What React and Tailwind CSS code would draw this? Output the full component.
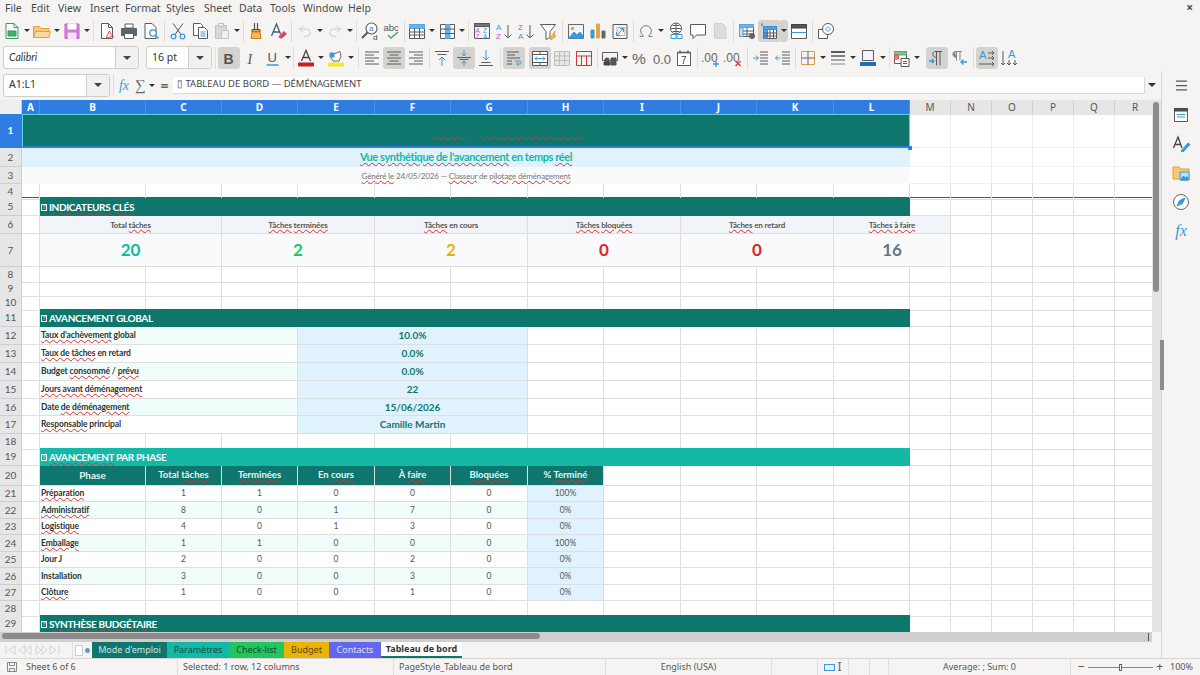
import { Undo2, Redo2, Omega, Menu } from "lucide-react";

const ui = "#5a5a5a";
const blue = "#3a9ad9";

const P = ({ d, c = ui, w = 1, f = "none" }) => <path d={d} stroke={c} strokeWidth={w} fill={f} />;

const icons = {
  newdoc: <><P d="M5 3.500h8l4 4v11H5z" c="#3b9c62" f="#fff" /><P d="M7 11h8v5H7z" c="#2e9e5b" f="#43b06f" /><P d="M13 3.500v4h4" c="#3b9c62" /></>,
  open: <><P d="M2.500 6.500h6l1.500 2h8v9h-15.500z" c="#e0a040" f="#f6c97a" /><P d="M2.500 17.500l2-6h15l-2 6z" c="#e0a040" f="#fbd9a0" /></>,
  save: <><P d="M4 4h14v14.500H4z" c="#c060d0" f="#d07cdc" /><P d="M7 4h8v5H7z" c="#fff" f="#fff" /><P d="M7 13h8v5.500H7z" c="#f3dff6" f="#f3dff6" /></>,
  pdf: <><P d="M5.500 3.500h7l4 4v11h-11z" f="#fff" /><P d="M12.500 3.500v4h4" /><P d="M10 18.500c2-5 3-7 3.500-7.500 1 2 1 4 4 5.500-3 0-5 .5-7 2z" c="#d43d3d" /></>,
  print: <><P d="M7 4h8v4H7z" f="#fff" /><P d="M3.500 8.500h15v7h-15z" c="#5a6570" f="#5a6570" /><P d="M6.500 13.500h9v5h-9z" f="#fff" /></>,
  preview: <><P d="M5 3.500h7l4 4v11H5z" f="#fff" /><circle cx="13" cy="13" r="3.200" stroke={blue} strokeWidth="1.300" fill="#fff" /><P d="M15.500 15.500l3 3" c={blue} w={1.500} /></>,
  cut: <><P d="M6 3.500l8 11M16 3.500l-8 11" c="#555" /><circle cx="6.500" cy="16.500" r="2.300" stroke={blue} strokeWidth="1.300" fill="none" /><circle cx="15.500" cy="16.500" r="2.300" stroke={blue} strokeWidth="1.300" fill="none" /></>,
  copy: <><P d="M4.500 3.500h7l2 2v10h-9z" f="#fff" /><P d="M9.500 7.500h6l3 3v8h-9z" f="#fff" /><P d="M11.500 12h5M11.500 14h5M11.500 16h5" c={blue} /></>,
  paste: <><P d="M4.500 5.500h11v13h-11z" c="#c4c4c4" f="#d8d8d8" /><P d="M7.500 3.500h5v3h-5z" c="#bbb" f="#eee" /><P d="M10.500 10.500h7v8h-7z" c="#c4c4c4" f="#efefef" /></>,
  clone: <><P d="M9.500 3v6M12.500 3v6" c="#555" w={1.200} /><P d="M7 9.500h8v2.500H7z" c="#555" f="#e8a33d" /><P d="M7 12h8l1 6.500H6z" c="#c97f1d" f="#f4b85c" /></>,
  clear: <><P d="M4.500 16L9.500 4l4 10M6.500 12h6" c="#41607e" w={1.300} /><P d="M12 16.500l5-5 2.500 2.500-5 4h-1.500z" c="#e0405a" f="#e0405a" /></>,
  find: <><circle cx="12.500" cy="8.500" r="5.500" stroke={ui} strokeWidth="1.100" fill="#fff" /><P d="M8.500 12.500l-5.500 5.500" c={ui} w={2} /><text x="10" y="11" fontSize="8" fill="#3a7cc4" fontFamily="Liberation Sans">a</text><text x="14" y="20" fontSize="8" fill="#444" fontFamily="Liberation Sans">d</text></>,
  spell: <><text x="2.500" y="11" fontSize="9.500" fill="#555" fontFamily="Liberation Sans">abc</text><P d="M7 15l3 3 7-6" c="#47a868" w={1.500} /></>,
  table: <><P d="M3.500 4.500h15v14h-15z" f="#fff" /><P d="M3.500 4.500h15v4h-15z" c="#5aa6e2" f="#6db3ea" /><P d="M3.500 12h15M3.500 15h15M8.500 8.500v10M13.500 8.500v10" /></>,
  cols: <><P d="M4.500 4.500h14v14h-14z" f="#fff" /><P d="M9.500 4.500h4.500v14H9.500z" c="#5aa6e2" f="#6db3ea" /><P d="M4.500 9h14M4.500 13.500h14" /></>,
  sort: <><P d="M3.500 3.500h15v15h-15z" f="#f7f7f7" /><P d="M3.500 3.500h15v3h-15z" c="#555" f="#777" /><text x="4.500" y="13" fontSize="6.500" fill="#b05cc0" fontFamily="Liberation Sans">A</text><text x="4.500" y="18.500" fontSize="6.500" fill="#b05cc0" fontFamily="Liberation Sans">Z</text><text x="12" y="13" fontSize="6.500" fill={blue} fontFamily="Liberation Sans">Z</text><text x="12" y="18.500" fontSize="6.500" fill={blue} fontFamily="Liberation Sans">A</text></>,
  asc: <><text x="3" y="10" fontSize="8" fill={blue} fontFamily="Liberation Sans">A</text><text x="3" y="18.500" fontSize="8" fill="#c050c8" fontFamily="Liberation Sans">Z</text><P d="M15 5v13M11.500 14.500l3.500 3.500 3.500-3.500" /></>,
  desc: <><text x="3" y="10" fontSize="8" fill="#c050c8" fontFamily="Liberation Sans">Z</text><text x="3" y="18.500" fontSize="8" fill={blue} fontFamily="Liberation Sans">A</text><P d="M15 5v13M11.500 14.500l3.500 3.500 3.500-3.500" /></>,
  filter: <><P d="M3.500 4.500h15l-5.500 7v6l-4 2v-8z" f="#fff" /><P d="M13 19l5-8-1 4 2 1-5 4z" c="#e8a33d" f="#f0b550" /></>,
  image: <><P d="M3.500 4.500h15v14h-15z" c="#666" f="#eaf4fb" /><circle cx="7.500" cy="8.500" r="1.700" fill="#e8a33d" /><P d="M4 18l5-6 3 3 3-3 3 4v2H4z" c={blue} f={blue} /></>,
  chart: <><P d="M4 10h3v8H4z" c={blue} f={blue} /><P d="M9.500 4h3v14h-3z" c="#e8a33d" f="#e8a33d" /><P d="M15 11h3v7h-3z" c="#666" f="#666" /></>,
  pivot: <><P d="M4 4.500h14v14H4z" f="#f4f4f4" /><P d="M8 7.500h8v8H8z" c="#bbb" /><P d="M8 15l6-6M11 8.500h3.500V12M11 15.500H7.500V12" c={blue} /></>,
  link: <><circle cx="11" cy="8.500" r="5.500" stroke={ui} fill="#fff" /><P d="M5.500 8.500h11M11 3v11M7.500 5.500h7M7.500 11.500h7" /><P d="M6 14.500h5v4H6zM12 14.500h5v4h-5z" c={blue} f="#fff" /></>,
  comment: <P d="M3.500 4.500h15v10.500h-9l-3.500 3.500v-3.500h-2.500z" f="#fff" />,
  note: <><P d="M5.500 3.500h8l3.500 3.500v11.500H5.500z" c="#d0d0d0" f="#dcdcdc" /></>,
  headers: <><P d="M3.500 4.500h14v12h-14z" f="#fff" /><P d="M3.500 4.500h14v3h-14z" c="#5aa6e2" f="#6db3ea" /><P d="M3.500 8v8.500h3.500V8z" c="#5aa6e2" f="#bfe0f7" /><P d="M7 11h10M7 14h10M11 8v8" /><circle cx="16" cy="16" r="3" fill="#666" /></>,
  freeze: <><P d="M5.500 6.500h13v12h-13z" f="#fff" /><P d="M5.500 6.500h13v3h-13z" c="#3a8fd9" f="#4aa0e5" /><P d="M5.500 9.500h4v9h-4z" c="#3a8fd9" f="#4aa0e5" /><P d="M5.500 13h13M5.500 16h13M12 9.500v9M15.500 9.500v9" /><P d="M4 3v3M3 5l2 0" c={blue} /></>,
  split: <><P d="M3.500 4.500h15v14h-15z" f="#fff" /><P d="M3.500 4.500h15v3.500h-15z" c="#444" f="#555" /><P d="M3.500 12.500h15" c={blue} /></>,
  shapes: <><P d="M3.500 9.500h9v9h-9z" f="#fff" /><circle cx="13" cy="9" r="5.500" stroke={ui} fill="#fff" /><P d="M13 6.500l2.500 2.500-2.500 2.500-2.500-2.500z" c={blue} /></>,
  bold: <text x="5.500" y="16.500" fontSize="14" fontWeight="700" fill="#555" fontFamily="Liberation Sans">B</text>,
  italic: <text x="7.500" y="16.500" fontSize="14" fontStyle="italic" fill="#555" fontFamily="Liberation Serif">I</text>,
  under: <><text x="5.500" y="15" fontSize="13" fill="#555" fontFamily="Liberation Sans">U</text><P d="M4.500 18h12" c={blue} w={1.500} /></>,
  fcolor: <><P d="M6.500 14L11 3.500 15.500 14M8 10.500h6" c="#444" w={1.300} /><P d="M3.500 16h15v3h-15z" c="#c82020" f="#c82020" /></>,
  hcolor: <><P d="M6 11V6.500h4l5-2 1 5-2 4.500H8z" c="#666" f="#fff" /><P d="M5 6h4v4H5z" c={blue} f={blue} /><P d="M3.500 16h15v3h-15z" c="#f5e92c" f="#f5e92c" /></>,
  left: <P d="M4 5h14M4 8h9M4 11h14M4 14h9M4 17h14" />,
  center: <P d="M4 5h14M6.500 8h9M4 11h14M6.500 14h9M4 17h14" />,
  right: <P d="M4 5h14M9 8h9M4 11h14M9 14h9M4 17h14" />,
  top: <><P d="M4 4.500h14M6.500 7.500h9" /><P d="M11 10v9M8 13l3-3 3 3" c={blue} /></>,
  mid: <><P d="M4 10.500h14M6.500 12.500h9" /><P d="M11 3v6M8.500 6.500l2.500 2.500 2.500-2.500M11 19v-5M8.500 16.500l2.500-2.500 2.500 2.500" c={blue} /></>,
  bottom: <><P d="M4 18.500h14M6.500 15.500h9" /><P d="M11 3v10M8 10l3 3 3-3" c={blue} /></>,
  wrap: <><P d="M4 5h12M4 8h8M4 11h13M4 14h5M4 17h5" /><P d="M12 14h5c1.500 0 1.500 3 0 3h-3M15.500 15l-2 2 2 2" c={blue} /></>,
  merge: <><P d="M3.500 4.500h15v14h-15z" f="#fff" /><P d="M3.500 4.500h15v3h-15zM3.500 15.500h15" c="#555" /><P d="M6 11.500h10M8 9.500l-2 2 2 2M14 9.500l2 2-2 2" c={blue} /><P d="M11 4.500v3M11 15.500v3" /></>,
  mergeoff: <P d="M3.500 4.500h15v14h-15zM3.500 9h15M3.500 13.500h15M8.500 4.500v14M13.500 4.500v14" c="#bdbdb9" f="#e8e8e6" />,
  unmerge: <P d="M3.500 4.500h15v14h-15zM3.500 9h15M8.500 9v9.500M13.500 9v9.500" c="#c83a3a" />,
  money: <><P d="M3.500 5.500h15v8h-15z" /><circle cx="8" cy="13" r="2.500" fill="#555" /><P d="M12 11h5v7h-5z" c="#555" f="#555" /><P d="M5 15h6v3H5z" c="#444" f="#444" /></>,
  percent: <text x="3" y="17" fontSize="15.500" fill="#666" fontFamily="Liberation Sans">%</text>,
  number: <text x="2" y="16.500" fontSize="13" fill="#666" fontFamily="Liberation Sans">0.0</text>,
  date: <><P d="M4.500 5.500h13v13h-13z" f="#fff" /><P d="M4.500 5.500h13M7 3.500v3M15 3.500v3" w={1.400} /><text x="8" y="16.500" fontSize="10" fill="#444" fontFamily="Liberation Sans">7</text></>,
  adddec: <><text x="1" y="15" fontSize="12" fill="#666" fontFamily="Liberation Sans">.00</text><P d="M16 14v6M13 17h6" c={blue} w={1.300} /></>,
  deldec: <><text x="1" y="15" fontSize="12" fill="#666" fontFamily="Liberation Sans">.00</text><P d="M13.500 14l5 5M18.500 14l-5 5" c="#d43d3d" w={1.300} /></>,
  indent: <><P d="M10 5h8M10 8h8M10 11h8M10 14h8M10 17h8" /><P d="M3 11h5M6 8.500l2.500 2.500L6 13.500" c={blue} /></>,
  outdent: <><P d="M10 5h8M10 8h8M10 11h8M10 14h8M10 17h8" /><P d="M8.500 11h-5M6 8.500L3.500 11 6 13.500" c={blue} /></>,
  borders: <><P d="M4.500 4.500h13v13h-13z" c="#d99a55" /><P d="M11 4.500v13M4.500 11h13" c="#666" /></>,
  bstyle: <><P d="M4 5h14" w={2} /><P d="M4 9h14" w={1.500} /><P d="M4 13h14" /><P d="M4 17h14" c="#888" /></>,
  bcolor: <><P d="M5.500 3.500h11v10h-11z" f="#f4f4f4" /><P d="M3.500 15.500h15v3h-15z" c="#1f6fb5" f="#1f6fb5" /></>,
  cond: <><P d="M3.500 4.500h12v12h-12z" f="#fff" /><P d="M3.500 4.500h12v3.500h-12z" c="#5aa86a" f="#7cc48b" /><P d="M3.500 8h4v4h-4z" c="#d85050" f="#e88080" /><P d="M10 11.500h8v8h-8z" c="#555" f="#fff" /><P d="M12 14.500h4M12 16.500h4" /></>,
  ltr: <><P d="M10.500 4.500v14M14 4.500v14M9 4.500h7" /><P d="M9 4.500c-3 0-3 6 1.500 6" /><P d="M3 14h5M6 12l2 2-2 2" c={blue} w={1.300} /></>,
  rtl: <><P d="M8.500 4.500v9M12 4.500v9M7 4.500h7" c="#888" /><P d="M7 4.500c-3 0-3 6 1.500 6" c="#888" f="#888" /><P d="M19 15h-6M15.500 12.500L13 15l2.500 2.500" c={blue} w={1.300} /></>,
  atext: <><text x="3" y="12" fontSize="11" fill={blue} fontFamily="Liberation Sans">A</text><P d="M12 6h6M16 4l2 2-2 2M12 11h6M16 9l2 2-2 2M3 17h15M16 15l2 2-2 2" w={1} /></>,
  vtext: <><text x="10" y="11" fontSize="11" fill={blue} fontFamily="Liberation Sans">A</text><P d="M5 4v14M3 16l2 2 2-2M11 13v5M9 16l2 2 2-2M17 13v5M15 16l2 2 2-2" /></>,
};

const Ic = ({ i }) => (
  <svg viewBox="0 0 22 22" className="w-[22px] h-[22px]">{icons[i]}</svg>
);

const B = ({ i, on }) => (
  <div className={`w-[22px] h-[22px] shrink-0 rounded-[3px] ${on ? "bg-[#d5d3d0]" : ""}`}>
    <Ic i={i} />
  </div>
);

const Dd = ({ on }) => (
  <div className={`w-[8px] h-[22px] shrink-0 flex items-center justify-center ${on ? "bg-[#d5d3d0] rounded-r-[3px]" : ""}`}>
    <div className="border-x-[3px] border-x-transparent border-t-[3px] border-t-[#333]" />
  </div>
);

const Sep = ({ w, line = true }) => (
  <div className={`${w} h-[22px] shrink-0 flex justify-center`}>
    {line && <div className="w-px h-full bg-[#dfdedb]" />}
  </div>
);

const Combo = ({ w, split, children, italic }) => (
  <div className={`${w} h-[23px] shrink-0 flex rounded-[3px] border border-[#cfcdca] bg-white overflow-hidden`}>
    <div className={`flex-1 flex items-center pl-[5px] text-[10.5px] text-[#333] ${italic ? "italic font-['Lato',sans-serif]" : ""}`}>{children}</div>
    <div className={`${split} flex items-center justify-center border-l border-[#cfcdca] bg-[#f2f1ef]`}>
      <div className="border-x-[4px] border-x-transparent border-t-[4px] border-t-[#444]" />
    </div>
  </div>
);

const Sq = ({ children }) => (
  <span className="underline decoration-wavy decoration-[#d8312f] decoration-1 underline-offset-[1px]">{children}</span>
);

const cols = ["A", "B", "C", "D", "E", "F", "G", "H", "I", "J", "K", "L", "M", "N", "O", "P", "Q", "R"];
const gridCols = "grid grid-cols-[22px_18px_106px_76px_76px_77px_76px_77px_76px_77px_76px_77px_76px_41px_41px_41px_41px_41px_41px]";

const C = ({ className = "", children }) => (
  <div className={`min-w-0 border-r border-b border-[#dedede] flex items-center justify-center overflow-hidden whitespace-nowrap ${className}`}>
    {children}
  </div>
);

const Blanks = ({ n, className }) => Array.from({ length: n }, (_, i) => <C key={i} className={className} />);

const Row = ({ n, h, sel, frozen, children }) => (
  <div className={`${gridCols} ${h} shrink-0 ${frozen ? "border-b border-[#555]" : ""}`}>
    <div className={`flex items-center justify-center border-r border-b text-[10px] ${sel ? "bg-[#2f7de1] border-[#2f7de1] text-white font-bold" : "bg-[#e6e6e6] border-[#cfcfcf] text-[#555]"}`}>
      {n}
    </div>
    {children}
  </div>
);

const Section = ({ n, teal2, children }) => (
  <Row n={n} h="h-[18px]">
    <C />
    <div className={`col-span-11 flex items-center pl-[1px] text-[10px] tracking-[-0.35px] font-bold text-white whitespace-nowrap ${teal2 ? "bg-[#14b8a6]" : "bg-[#0f766e]"}`}>
      <span className="w-[6px] h-[7px] mr-[2px] border border-white text-[5px] leading-[5px] text-center">?</span>
      {children}
    </div>
    <Blanks n={6} />
  </Row>
);

const Empty = ({ n, h = "h-[14px]", frozen }) => (
  <Row n={n} h={h} frozen={frozen}><Blanks n={18} /></Row>
);

const kpis = [
  [<>Total <Sq>tâches</Sq></>, "20", "text-[#14b8a6]"],
  [<><Sq>Tâches</Sq> <Sq>terminées</Sq></>, "2", "text-[#22c55e]"],
  [<><Sq>Tâches</Sq> en cours</>, "2", "text-[#eab308]"],
  [<><Sq>Tâches</Sq> <Sq>bloquées</Sq></>, "0", "text-[#dc2626]"],
  [<><Sq>Tâches</Sq> en retard</>, "0", "text-[#dc2626]"],
  [<><Sq>Tâches</Sq> <Sq>à faire</Sq></>, "16", "text-[#64748b]"],
];

const globals = [
  [<><Sq>Taux d'achèvement</Sq> global</>, "10.0%", "h-[18px]", "bg-[#f0fdfa]"],
  [<><Sq>Taux de tâches</Sq> en retard</>, "0.0%", "h-[18px]", "bg-white"],
  [<>Budget <Sq>consommé</Sq> / <Sq>prévu</Sq></>, "0.0%", "h-[18px]", "bg-[#f0fdfa]"],
  [<><Sq>Jours avant déménagement</Sq></>, "22", "h-[18px]", "bg-white"],
  [<>Date <Sq>de déménagement</Sq></>, "15/06/2026", "h-[17px]", "bg-[#f0fdfa]"],
  [<><Sq>Responsable</Sq> principal</>, "Camille Martin", "h-[18px]", "bg-white"],
];

const phases = [
  ["Préparation", true, 1, 1, 0, 0, 0, "100%", "h-[16px]"],
  ["Administratif", true, 8, 0, 1, 7, 0, "0%", "h-[17px]"],
  ["Logistique", true, 4, 0, 1, 3, 0, "0%", "h-[16px]"],
  ["Emballage", true, 1, 1, 0, 0, 0, "100%", "h-[17px]"],
  ["Jour J", false, 2, 0, 0, 2, 0, "0%", "h-[16px]"],
  ["Installation", false, 3, 0, 0, 3, 0, "0%", "h-[17px]"],
  ["Clôture", true, 1, 0, 0, 1, 0, "0%", "h-[16px]"],
];

const heads = [
  <>Total <Sq>tâches</Sq></>,
  <Sq>Terminées</Sq>,
  <>En <Sq>cours</Sq></>,
  <>À <Sq>faire</Sq></>,
  <Sq>Bloquées</Sq>,
  <>% <Sq>Terminé</Sq></>,
];

const tabs = [
  ["Mode d'emploi", "w-[75px] bg-[#0f766e] text-[#c9e7e2]"],
  ["Paramètres", "w-[62px] bg-[#14b8a6] text-[#0b4f49]"],
  ["Check-list", "w-[55px] bg-[#22c55e] text-[#0d4d25]"],
  ["Budget", "w-[45px] bg-[#eab308] text-[#5e4703]"],
  ["Contacts", "w-[52px] bg-[#6366f1] text-[#dfe0fd]"],
];

function Sheet() {
  return (
    <div className="relative h-[532px] overflow-hidden bg-white font-['Lato',sans-serif]">
      <div className={`${gridCols} h-[14px]`}>
        <div className="bg-[#eeeeee] border-r border-b border-[#cfcfcf]" />
        {cols.map((c, i) => (
          <div
            key={c}
            className={`flex items-center justify-center border-r text-[10px] font-['Noto_Sans',sans-serif] ${i < 12 ? "bg-[#2f7de1] border-[#4f90e6] text-white font-bold" : "bg-[#e6e6e6] border-[#cfcfcf] text-[#555]"}`}
          >
            {c}
          </div>
        ))}
      </div>

      <Row n={1} h="h-[34px]" sel>
        <div className="col-span-12 bg-[#0f766e] flex items-center justify-center text-[12px] text-[#0f766e] font-bold">
          ▯ TABLEAU DE&nbsp;<Sq>BORD</Sq>&nbsp;—&nbsp;<Sq>DÉMÉNAGEMENT</Sq>
        </div>
        <Blanks n={6} className="border-[#eeeeee]" />
      </Row>
      <Row n={2} h="h-[19px]">
        <div className="col-span-12 bg-[#e0f2fe] flex items-center justify-center text-[11px] tracking-[-0.4px] font-bold text-[#14b8a6]">
          <span><Sq>Vue synthétique de l'avancement</Sq> en temps <Sq>réel</Sq></span>
        </div>
        <Blanks n={6} className="border-[#eeeeee]" />
      </Row>
      <Row n={3} h="h-[17px]">
        <div className="col-span-12 bg-[#f8fafc] flex items-center justify-center text-[8px] tracking-[-0.15px] text-[#777]">
          <span><Sq>Généré le</Sq> 24/05/2026 — <Sq>Classeur</Sq> de <Sq>pilotage déménagement</Sq></span>
        </div>
        <Blanks n={6} className="border-[#eeeeee]" />
      </Row>
      <Empty n={4} frozen />
      <Section n={5}><span><Sq>INDICATEURS CLÉS</Sq></span></Section>

      <Row n={6} h="h-[18px]">
        <C />
        {kpis.map(([label], i) => (
          <C key={i} className="col-span-2 bg-[#f1f5f9] text-[8px] tracking-[-0.15px] font-bold text-[#555]">
            <span>{label}</span>
          </C>
        ))}
        <Blanks n={5} />
      </Row>
      <Row n={7} h="h-[33px]">
        <C />
        {kpis.map(([, value, color], i) => (
          <C key={i} className={`col-span-2 bg-[#f8fafc] text-[17px] font-bold ${color}`}>{value}</C>
        ))}
        <Blanks n={5} />
      </Row>
      <Empty n={8} />
      <Empty n={9} />
      <Empty n={10} />

      <Section n={11}>AVANCEMENT GLOBAL</Section>
      {globals.map(([label, value, h, bg], i) => (
        <Row key={i} n={12 + i} h={h}>
          <C />
          <C className={`col-span-3 justify-start pl-[1px] text-[8.5px] tracking-[-0.1px] font-bold text-[#333] ${bg}`}><span>{label}</span></C>
          <C className="col-span-3 bg-[#e0f2fe] border-[#cfdbe6] font-bold text-[#0f766e] text-[10px]">{value}</C>
          <Blanks n={11} />
        </Row>
      ))}
      <Empty n={18} />

      <Section n={19} teal2><span><Sq>AVANCEMENT</Sq> PAR PHASE</span></Section>
      <Row n={20} h="h-[20px]">
        <C />
        <C className="bg-[#0f766e] border-[#6fa9a3] text-[10px] font-bold text-[#e6f4f2]">Phase</C>
        {heads.map((t, i) => (
          <C key={i} className="bg-[#0f766e] border-[#6fa9a3] text-[9.5px] font-bold text-[#e6f4f2]"><span>{t}</span></C>
        ))}
        <Blanks n={10} />
      </Row>
      {phases.map(([name, sq, a, b, c, d, e, pct, h], i) => (
        <Row key={name} n={21 + i} h={h}>
          <C />
          <C className={`justify-start pl-[1px] text-[8.5px] tracking-[-0.1px] font-bold text-[#333] border-[#d4d4d4] ${i % 2 ? "bg-[#f0fdfa]" : "bg-white"}`}>
            {sq ? <span><Sq>{name}</Sq></span> : name}
          </C>
          {[a, b, c, d, e].map((v, k) => (
            <C key={k} className={`text-[8.5px] text-[#555] border-[#d4d4d4] ${i % 2 ? "bg-[#f0fdfa]" : "bg-white"}`}>{v}</C>
          ))}
          <C className="bg-[#e0f2fe] border-[#cfdbe6] text-[8.5px] text-[#555]">{pct}</C>
          <Blanks n={10} />
        </Row>
      ))}
      <Empty n={28} />
      <Section n={29}><span><Sq>SYNTHÈSE BUDGÉTAIRE</Sq></span></Section>

      {/* selection frame of A1:L1 */}
      <div className="absolute left-[22px] top-[14px] w-[888px] h-[34px] border border-[#5fd0e0] border-b-2 border-b-[#2f7de1]" />
      <div className="absolute left-[908px] top-[46px] w-[4px] h-[4px] bg-[#2f7de1]" />
    </div>
  );
}

function FormulaBar() {
  return (
    <div className="h-[29px] shrink-0 flex items-center pl-[3px] pb-[1px]">
      <Combo w="w-[107px]" split="w-[23px]">A1:L1</Combo>
      <Sep w="w-[6px]" />
      <span className="w-[16px] text-center text-[14px] italic text-[#3a9ad9] font-['Liberation_Serif',serif]">fx</span>
      <span className="w-[16px] text-center text-[15px] text-[#666] font-['Liberation_Serif',serif]">∑</span>
      <Dd />
      <span className="w-[17px] text-center text-[14px] font-bold text-[#666]">=</span>
      <div className="w-[972px] h-[17px] bg-white border-b border-r border-[#d8d8d8] flex items-center pl-[4px] text-[9.5px] text-[#444]">
        ▯ TABLEAU DE BORD — DÉMÉNAGEMENT
      </div>
      <div className="ml-[3px] border-x-[4px] border-x-transparent border-t-[4px] border-t-[#333]" />
    </div>
  );
}

const Tri = ({ d }) => <P d={d} c="#d4d4d4" />;

export default function App() {
  return (
    <div className="w-[1200px] h-[675px] overflow-hidden flex flex-col bg-[#f5f4f2] text-[#444] font-['Noto_Sans',sans-serif]">
      <div className="h-[17px] shrink-0 flex items-center text-[10.5px] text-[#4a4a4a] relative">
        {[["File", "w-[31px]"], ["Edit", "w-[27px]"], ["View", "w-[32px]"], ["Insert", "w-[35px]"], ["Format", "w-[41px]"], ["Styles", "w-[38px]"], ["Sheet", "w-[35px]"], ["Data", "w-[31px]"], ["Tools", "w-[33px]"], ["Window", "w-[45px]"], ["Help", "w-[30px]"]].map(([m, w], i) => (
          <span key={m} className={`${w} ${i === 0 ? "pl-[5px]" : ""}`}>{m}</span>
        ))}
        <span className="absolute right-[7px] top-0 text-[12px] font-bold leading-[16px]">×</span>
      </div>

      <div className="h-[27px] shrink-0 flex items-center pl-[1px]">
        <B i="newdoc" /><Dd /><B i="open" /><Dd /><B i="save" /><Dd /><Sep w="w-[5px]" />
        <B i="pdf" /><B i="print" /><B i="preview" /><Sep w="w-[5px]" />
        <B i="cut" /><B i="copy" /><B i="paste" /><Dd /><Sep w="w-[4px]" />
        <B i="clone" /><B i="clear" /><Sep w="w-[5px]" />
        <div className="w-[22px] flex justify-center text-[#c4c4c4]"><Undo2 size={16} strokeWidth={1.2} /></div><Dd />
        <div className="w-[22px] flex justify-center text-[#c4c4c4]"><Redo2 size={16} strokeWidth={1.2} /></div><Dd /><Sep w="w-[5px]" />
        <B i="find" /><B i="spell" /><Sep w="w-[3px]" />
        <B i="table" /><Dd /><B i="cols" /><Dd /><Sep w="w-[5px]" />
        <B i="sort" /><B i="asc" /><B i="desc" /><B i="filter" /><Sep w="w-[6px]" />
        <B i="image" /><B i="chart" /><B i="pivot" /><Sep w="w-[4px]" />
        <div className="w-[22px] flex justify-center text-[#555]"><Omega size={16} strokeWidth={1.2} /></div><Dd />
        <B i="link" /><B i="comment" /><B i="note" /><Sep w="w-[5px]" />
        <B i="headers" /><B i="freeze" on /><Dd on /><B i="split" /><Sep w="w-[5px]" />
        <B i="shapes" />
      </div>

      <div className="h-[27px] shrink-0 flex items-center pl-[3px]">
        <Combo w="w-[136px]" split="w-[23px]" italic>Calibri</Combo>
        <Sep w="w-[7px]" line={false} />
        <Combo w="w-[66px]" split="w-[23px]">16 pt</Combo>
        <Sep w="w-[6px]" />
        <B i="bold" on /><B i="italic" /><B i="under" /><Dd /><Sep w="w-[3px]" />
        <B i="fcolor" /><Dd /><B i="hcolor" /><Dd /><Sep w="w-[6px]" />
        <B i="left" /><B i="center" on /><B i="right" /><Sep w="w-[4px]" />
        <B i="top" /><B i="mid" on /><B i="bottom" /><Sep w="w-[6px]" />
        <B i="wrap" on /><Sep w="w-[4px]" line={false} /><B i="merge" on /><B i="mergeoff" /><B i="unmerge" /><Sep w="w-[4px]" />
        <B i="money" /><Dd /><B i="percent" /><B i="number" /><B i="date" /><Sep w="w-[5px]" />
        <B i="adddec" /><B i="deldec" /><Sep w="w-[6px]" />
        <B i="indent" /><B i="outdent" /><Sep w="w-[3px]" />
        <B i="borders" /><Dd /><B i="bstyle" /><Dd /><B i="bcolor" /><Dd /><Sep w="w-[4px]" />
        <B i="cond" /><Dd /><Sep w="w-[5px]" line={false} />
        <B i="ltr" on /><B i="rtl" /><Sep w="w-[6px]" />
        <B i="atext" on /><B i="vtext" />
      </div>

      <div className="h-[587px] shrink-0 flex">
        <div className="w-[1162px] flex flex-col border-r border-[#d8d7d5]">
          <FormulaBar />
          <div className="flex h-[532px] shrink-0 relative">
            <div className="w-[1152px]"><Sheet /></div>
            <div className="w-[9px] bg-[#e4e4e4] pt-[2px]">
              <div className="w-[6px] h-[190px] ml-[1px] rounded-full bg-[#8c8c8c]" />
            </div>
            <div className="absolute right-[-3px] top-[240px] w-[4px] h-[50px] bg-[#8c8c8c]" />
          </div>
          <div className="h-[10px] shrink-0 w-[1152px] bg-[#cfcfcf] pl-[2px] pt-[1px] flex justify-between pr-[3px]">
            <div className="w-[538px] h-[6px] rounded-full bg-[#8c8c8c]" />
            <div className="w-px h-[8px] bg-[#555]" />
          </div>
          <div className="h-[16px] shrink-0 flex items-stretch text-[9px]">
            <div className="w-[72px] flex items-center pl-[5px]">
              <svg viewBox="0 0 56 12" className="w-[56px] h-[12px]">
                <Tri d="M1 1.500v9M10 1.500L4 6l6 4.500zM20 1.500L14 6l6 4.500zM26 1.500L21 6l5 4.500zM31 1.500L36 6l-5 4.500zM37 1.500L42 6l-5 4.500zM45 1.500L51 6l-6 4.500zM54 1.500v9" />
              </svg>
            </div>
            <div className="w-[20px] flex items-center gap-[2px] border-l border-[#e0dfdd] pl-[2px]">
              <div className="w-[8px] h-[11px] bg-white border border-[#ccc]" />
              <div className="w-[5px] h-[5px] rounded-full bg-[#5a9bd5]" />
            </div>
            {tabs.map(([t, cls]) => (
              <div key={t} className={`${cls} flex items-center justify-center`}>{t}</div>
            ))}
            <div className="w-[81px] bg-white border-b-2 border-[#0f766e] flex items-center justify-center font-bold text-[#333]">Tableau de bord</div>
          </div>
        </div>

        <div className="w-[38px] flex flex-col items-center text-[#555]">
          <div className="h-[29px] flex items-center justify-center"><Menu size={15} strokeWidth={2} /></div>
          <div className="w-[38px] flex flex-col items-center gap-[7px] pt-[4px]">
            <svg viewBox="0 0 22 22" className="w-[22px] h-[22px]"><P d="M4.500 4.500h13v13h-13z" f="#fff" /><P d="M4.500 4.500h13v2.500h-13z" c="#444" f="#555" /><P d="M7 10.500h8M7 13h8" c={blue} /></svg>
            <svg viewBox="0 0 22 22" className="w-[22px] h-[22px]"><P d="M3.500 15L8 4l4 11M5 11.500h6" c="#444" w={1.300} /><P d="M11 18l7-8 2 1.500-7 7.500z" c={blue} f={blue} /></svg>
            <svg viewBox="0 0 22 22" className="w-[22px] h-[22px]"><P d="M3 5h6l1.500 2H19v10H3z" c="#e0a040" f="#f6c97a" /><P d="M10 10h9v8h-9z" c={blue} f="#bfe0f7" /><P d="M10.500 18l3-4 2 2 1.500-1.500 2 3.500z" c={blue} f={blue} /></svg>
            <svg viewBox="0 0 22 22" className="w-[22px] h-[22px]"><circle cx="11" cy="11" r="7.500" stroke="#666" fill="#fff" /><P d="M15 7l-2.500 5.500L7 15l2.500-5.500z" c={blue} f={blue} /></svg>
            <span className="h-[22px] leading-[22px] text-[16px] italic text-[#3a9ad9] font-['Liberation_Serif',serif]">fx</span>
          </div>
        </div>
      </div>

      <div className="h-[17px] shrink-0 flex items-center text-[9px] text-[#555] border-t border-[#d8d7d5]">
        <div className="w-[178px] flex items-center pl-[6px] gap-[8px] border-r border-[#e0dfdd] h-full">
          <svg viewBox="0 0 12 12" className="w-[12px] h-[12px]"><P d="M1.500 1.500h9v9h-9zM3.500 1.500v3h5v-3M3.500 10.500v-3h5v3" c="#888" /></svg>
          Sheet 6 of 6
        </div>
        <div className="w-[216px] pl-[5px] border-r border-[#e0dfdd] h-full flex items-center">Selected: 1 row, 12 columns</div>
        <div className="w-[212px] pl-[5px] border-r border-[#e0dfdd] h-full flex items-center">PageStyle_Tableau de bord</div>
        <div className="w-[166px] border-r border-[#e0dfdd] h-full flex items-center justify-center">English (USA)</div>
        <div className="w-[46px] h-full border-r border-[#e0dfdd]" />
        <div className="w-[31px] h-full flex items-center justify-center gap-[2px] border-r border-[#e0dfdd]">
          <div className="w-[11px] h-[7px] border border-[#3a9ad9] bg-[#e3f1fb]" />
          <span className="text-[#666] text-[12px] leading-none">I</span>
        </div>
        <div className="w-[21px] h-full border-r border-[#e0dfdd]" />
        <div className="w-[19px] h-full border-r border-[#e0dfdd]" />
        <div className="w-[182px] h-full flex items-center justify-center border-r border-[#e0dfdd]">Average: ; Sum: 0</div>
        <div className="w-[92px] flex items-center gap-[3px] pl-[7px]">
          <span className="text-[12px] leading-none">−</span>
          <div className="relative w-[66px] h-px bg-[#888]">
            <div className="absolute left-[31px] top-[-3px] w-[3px] h-[7px] border border-[#666] bg-[#f5f4f2]" />
          </div>
          <span className="text-[12px] leading-none">+</span>
        </div>
        <div className="flex-1 text-center">100%</div>
      </div>
    </div>
  );
}
